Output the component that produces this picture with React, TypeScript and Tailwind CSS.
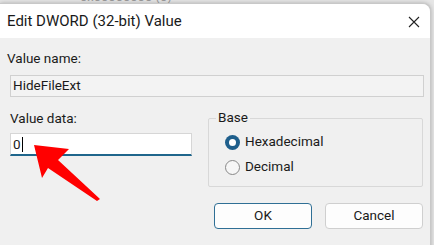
import React from "react";

export default function App() {
  const font = { fontFamily: 'Roboto, "Noto Sans", sans-serif' };
  return (
    <div className="relative w-[434px] h-[245px] overflow-hidden bg-[#e6e6e6]" style={font}>
      <div className="absolute left-[80px] top-[-10px] text-[13px] leading-[13px] text-[#9a9a9a]">0x00000000 (0)</div>
      <div className="absolute left-0 top-[3px] w-[431px] h-[260px] rounded-tr-[8px] border-t border-r border-[#c8c8c8] bg-[#f0f0f0] flex flex-col shadow-[0_0_4px_rgba(0,0,0,0.25)]">
        <div className="h-[34px] bg-white flex items-center justify-between pl-[7px] pr-[10px] rounded-tr-[8px]">
          <span className="text-[15px] text-[#1a1a1a] leading-none">Edit DWORD (32-bit) Value</span>
          <svg width="12" height="12" viewBox="0 0 12 12" className="mt-[2px]">
            <path d="M1 1 L11 11 M11 1 L1 11" stroke="#222" strokeWidth="1.1" />
          </svg>
        </div>
        <div className="flex flex-col pl-[10px] pt-[14px]">
          <div className="text-[13.5px] text-[#1a1a1a] leading-none -ml-[3px]">Value name:</div>
          <div className="mt-[9px] h-[22px] w-[414px] border border-[#d0d0d0] bg-[#f3f3f3] flex items-center pl-[2px] text-[13.5px] text-[#1a1a1a]">HideFileExt</div>
          <div className="flex mt-[15px] gap-[15px]">
            <div className="flex flex-col w-[182px]">
              <div className="text-[13.5px] text-[#1a1a1a] leading-none">Value data:</div>
              <div className="mt-[8px] h-[23px] bg-white border border-[#d6d6d6] border-b-2 border-b-[#1f668c] flex items-center pl-[2px] text-[13.5px] text-[#1a1a1a]">
                0<span className="inline-block w-px h-[15px] bg-black ml-[1px]" />
              </div>
            </div>
            <div className="flex flex-col w-[215px] ml-[1px]">
              <div className="relative mt-[6px] h-[69px] border border-[#d8d8d8] rounded-[2px] flex flex-col pl-[16px] pt-[16px] gap-[10px]">
                <span className="absolute -top-[8px] left-[7px] px-[2px] bg-[#f0f0f0] text-[13.5px] leading-none text-[#1a1a1a]">Base</span>
                <div className="flex items-center gap-[5px]">
                  <span className="w-[15px] h-[15px] rounded-full bg-[#1f5f8c] flex items-center justify-center">
                    <span className="w-[7px] h-[7px] rounded-full bg-white" />
                  </span>
                  <span className="text-[13.5px] text-[#1a1a1a] leading-none">Hexadecimal</span>
                </div>
                <div className="flex items-center gap-[5px]">
                  <span className="w-[15px] h-[15px] rounded-full border border-[#888] bg-[#f6f6f6]" />
                  <span className="text-[13.5px] text-[#1a1a1a] leading-none">Decimal</span>
                </div>
              </div>
              <div className="flex mt-[16px] gap-[13px] pl-[6px]">
                <button className="w-[98px] h-[26px] rounded-[4px] border border-[#2f6f95] bg-[#fdfdfd] text-[13.5px] text-[#1a1a1a]">OK</button>
                <button className="w-[98px] h-[26px] rounded-[4px] border border-[#cfcfcf] bg-[#fdfdfd] text-[13.5px] text-[#1a1a1a]">Cancel</button>
              </div>
            </div>
          </div>
        </div>
      </div>
      <svg className="absolute left-0 top-0" width="434" height="245" viewBox="0 0 434 245">
        <polygon points="34,145 69,149 58,160 100,199 97,201 48,168 42,178" fill="#f00" />
      </svg>
    </div>
  );
}
